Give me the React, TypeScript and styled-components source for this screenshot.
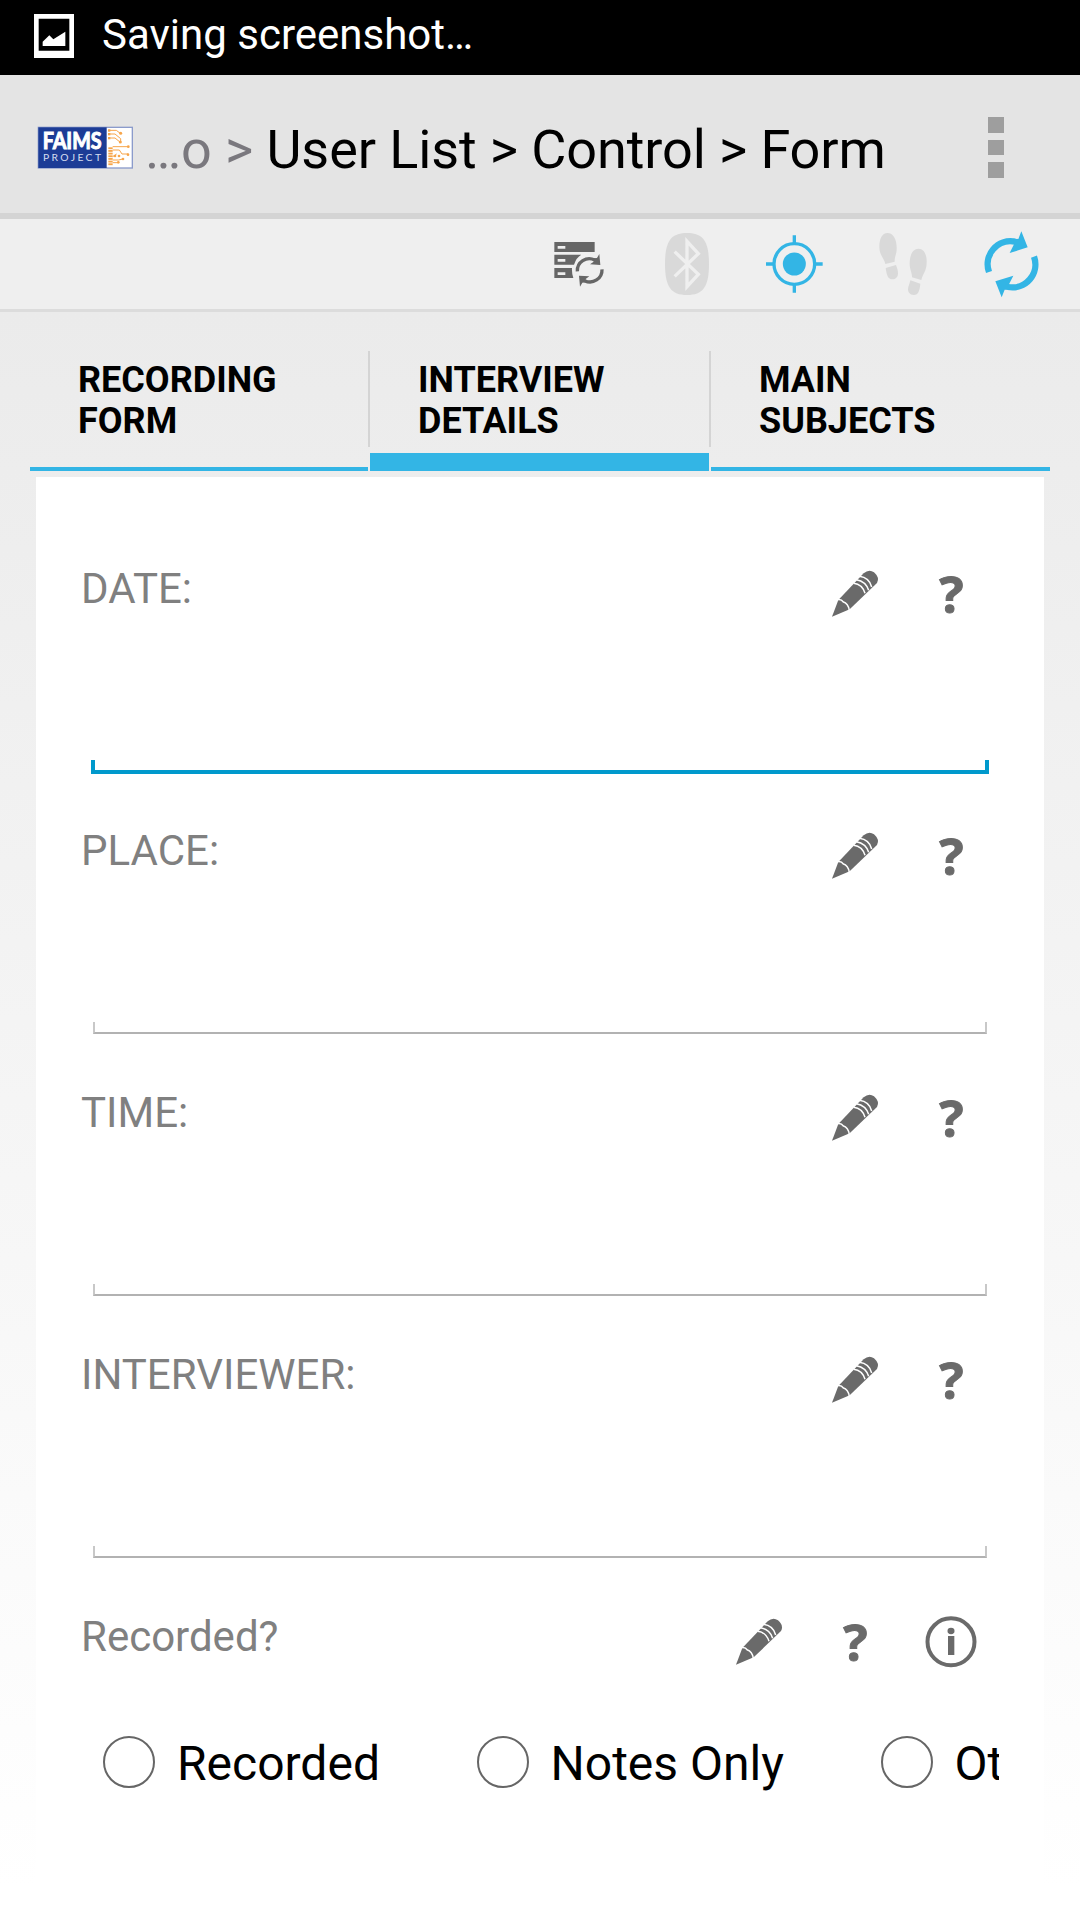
import React from "react";
import styled, { createGlobalStyle } from "styled-components";

const GlobalStyle = createGlobalStyle`
  * { box-sizing: border-box; }
  body { margin: 0; background: #fff; font-family: Roboto, "Liberation Sans", sans-serif; }
`;

const ACCENT = "#33b5e5";
const ICON = "#6a6a6a";
const MUTED = "#d9d9d9";

const Screen = styled.div`
  width: 1080px;
  height: 1920px;
  display: flex;
  flex-direction: column;
  overflow: hidden;
`;

const StatusBar = styled.div`
  height: 75px;
  flex: none;
  display: flex;
  align-items: flex-start;
  padding: 10px 0 0 34px;
  gap: 28px;
  background: #000;
  color: #fff;
  font-size: 42px;
  line-height: 50px;
`;

const StatusIcon = styled.svg`
  width: 40px;
  height: 44px;
  margin-top: 4px;
`;

const ActionBar = styled.header`
  height: 144px;
  flex: none;
  display: flex;
  align-items: center;
  padding: 0 76px 0 37px;
  background: #e4e4e4;
  border-bottom: 6px solid #d4d4d4;
`;

const Logo = styled.svg`
  width: 97px;
  height: 44px;
  margin-top: 8px;
`;

const Breadcrumb = styled.div`
  flex: 1;
  margin-left: 11px;
  padding-top: 11px;
  font-size: 54px;
  line-height: 64px;
  letter-spacing: -0.1px;
  white-space: pre;
  color: #000;
`;

const Faded = styled.span`
  color: #7a787e;
`;

const Overflow = styled.div`
  display: flex;
  flex-direction: column;
  gap: 7px;
  margin-top: 7px;
`;

const OverflowDot = styled.span`
  width: 16px;
  height: 15.5px;
  background: #9e9e9e;
`;

const Toolbar = styled.div`
  height: 93px;
  flex: none;
  display: flex;
  justify-content: flex-end;
  padding-right: 15px;
  background: #efefef;
  border-bottom: 3px solid #dcdcdc;
`;

const ToolIcon = styled.svg`
  width: 108px;
  height: 90px;
`;

const Content = styled.main`
  flex: 1;
  display: flex;
  flex-direction: column;
  padding: 39px 30px 0;
  background: linear-gradient(#ebebeb, #ffffff 98%);
`;

const Tabs = styled.nav`
  height: 120px;
  display: grid;
  grid-template-columns: 338px 2px 339px 2px 339px;
`;

const TabDivider = styled.span`
  height: 96px;
  background: #d4d4d4;
`;

const Tab = styled.div<{ $active?: boolean }>`
  padding: 9px 48px 0;
  border-bottom: ${(p) => (p.$active ? 18 : 4)}px solid ${ACCENT};
  font-size: 36px;
  font-weight: 700;
  line-height: 41px;
  color: #000;
  text-transform: uppercase;
`;

const Panel = styled.section`
  flex: 1;
  margin: 6px 6px 0;
  padding: 69px 45px 0;
  background: #fff;
`;

const Field = styled.div`
  height: 262px;
`;

const FieldHead = styled.div`
  height: 96px;
  display: flex;
  align-items: flex-start;
`;

const Label = styled.span`
  flex: 1;
  padding-top: 18px;
  font-size: 42px;
  line-height: 50px;
  color: #808080;
`;

const FieldIcon = styled.svg`
  width: 96px;
  height: 96px;
`;

const Help = styled.span`
  width: 96px;
  padding: 12px 0 0 1px;
  text-align: center;
  font: 700 51px/70px "Open Sans", "Noto Sans", sans-serif;
  -webkit-text-stroke: 1px ${ICON};
  color: ${ICON};
`;

const InputArea = styled.div<{ $focused?: boolean }>`
  height: ${(p) => (p.$focused ? 132 : 130)}px;
  margin: 0 ${(p) => (p.$focused ? 10 : 12)}px;
  display: flex;
  flex-direction: column;
  justify-content: flex-end;
`;

const Underline = styled.div<{ $focused?: boolean }>`
  height: ${(p) => (p.$focused ? 14 : 12)}px;
  border: ${(p) => (p.$focused ? "4px solid #0099cc" : "2px solid #c8c8c8")};
  border-bottom-color: ${(p) => (p.$focused ? "#0099cc" : "#b2b2b2")};
  border-top: 0;
`;

const RadioRow = styled.div`
  height: 144px;
  display: flex;
  align-items: center;
  gap: 96.6px;
  padding-left: 22px;
  overflow: hidden;
`;

const RadioOption = styled.div`
  flex: none;
  display: flex;
  align-items: center;
  gap: 22px;
  font-size: 48px;
  line-height: 56px;
  color: #000;
`;

const RadioCircle = styled.span`
  width: 52px;
  height: 52px;
  border: 2px solid #666;
  border-radius: 50%;
`;

const RadioText = styled.span`
  padding-top: 4px;
`;

const PictureIcon = () => (
  <StatusIcon viewBox="102 42 120 132">
    <path fill="#fff" fillRule="evenodd" d="M102 42h120v132H102zM116 56v96h92V56z" />
    <path fill="#fff" d="M128 138v-13l20-19 12 12 36-23v43z" />
  </StatusIcon>
);

const FaimsLogo = () => (
  <Logo viewBox="111 378 291 132">
    <rect x="115" y="382" width="282" height="122" fill="#fff" stroke="#8b9bcb" strokeWidth="4" />
    <rect x="115" y="382" width="205" height="122" fill="#1c3c96" />
    <text x="128" y="448" fontFamily="Lato, sans-serif" fontWeight="700" fontSize="68" fill="#fff" stroke="#fff" strokeWidth="3" textLength="177" lengthAdjust="spacingAndGlyphs">FAIMS</text>
    <text x="129" y="484" fontFamily="Lato, sans-serif" fontSize="31" fill="#d5dcf0" textLength="174">PROJECT</text>
    <g fill="none" stroke="#f7a54a" strokeWidth="3">
      <path d="M327 391h22l13 10M327 402h18l17 14v9M327 414h18l16 13M338 440h46M338 450h20l8 12h18M338 470l12-8M338 480h18l12-3M338 488h16" />
    </g>
    <g fill="#f7a54a">
      <rect x="324" y="388" width="7" height="7" />
      <rect x="324" y="399" width="7" height="7" />
      <rect x="324" y="411" width="7" height="7" />
      <circle cx="362" cy="400" r="4.500" />
      <circle cx="361" cy="426" r="4.500" />
      <circle cx="385" cy="440" r="4" />
      <circle cx="384" cy="464" r="4" />
      <circle cx="345" cy="468" r="4" />
      <circle cx="357" cy="468" r="4" />
      <circle cx="369" cy="477" r="4" />
      <circle cx="355" cy="487" r="4" />
      {[442, 450, 458, 466, 474, 482, 490].map((y) => (
        <rect key={y} x="325" y={y} width="13" height="5.500" />
      ))}
    </g>
  </Logo>
);

const SyncHalf = () => (
  <>
    <path d="M112 154a36 36 0 0 1 52-34" fill="none" stroke="#666" strokeWidth="10" />
    <path d="M178 102l3 33-31-2 11-8-2-10 12-1z" />
  </>
);

const ServerSyncIcon = () => (
  <ToolIcon viewBox="-45 -3 324 270" fill="#666">
    <path fillRule="evenodd" d="M43 66h121v30H43zM53 78v8h23v-8zM43 104h81q-15 8-22 30H43zM53 117v8h23v-8zM43 144h53q-1 17 4 30H43zM53 157v8h23v-8z" />
    <SyncHalf />
    <g transform="rotate(180 149 151)">
      <SyncHalf />
    </g>
  </ToolIcon>
);

const BluetoothIcon = () => (
  <ToolIcon viewBox="279 -3 324 270">
    <path fill={MUTED} d="M441 39C488 39 507 62 507 132S488 225 441 225 375 202 375 132 394 39 441 39z" />
    <path fill="none" stroke="#efefef" strokeWidth="10" d="M404 95L475 163 441 200V64L475 101 404 169" />
  </ToolIcon>
);

const TargetIcon = () => (
  <ToolIcon viewBox="603 -3 324 270">
    <circle cx="763" cy="132" r="61" fill="none" stroke={ACCENT} strokeWidth="10" />
    <circle cx="763" cy="132" r="34.500" fill={ACCENT} />
    <path stroke={ACCENT} strokeWidth="10" d="M763 46v24M763 194v24M678 132h24M824 132h24" />
  </ToolIcon>
);

const FootstepsIcon = () => (
  <ToolIcon viewBox="117 -3 324 270" fill={MUTED}>
    <path d="M232 39C250 39 260 58 260 82 261 102 253 110 254 125L226 132C224 118 208 106 208 80 208 56 217 39 232 39z" />
    <path d="M227 144L258 135C262 146 264 152 264 160 264 172 256 178 247 178 234 178 230 166 227 144z" />
    <path d="M326 86C342 86 351 104 350 128 350 152 338 162 334 180L306 172C307 158 298 148 299 128 300 104 308 86 326 86z" />
    <path d="M301 181L331 191C329 210 326 225 311 225 299 225 294 216 294 208 294 200 299 192 301 181z" />
  </ToolIcon>
);

const RefreshHalf = () => (
  <>
    <path d="M536 155A69 69 0 0 1 614 64" fill="none" stroke={ACCENT} strokeWidth="19" />
    <path d="M633 33L652 81 598 98 611 72 608 55 624 56z" fill={ACCENT} />
  </>
);

const RefreshIcon = () => (
  <ToolIcon viewBox="440 -4 324 270">
    <RefreshHalf />
    <g transform="rotate(180 603.500 132)">
      <RefreshHalf />
    </g>
  </ToolIcon>
);

const PencilIcon = () => (
  <FieldIcon viewBox="22 -12 288 288">
    <path fill={ICON} d="M97 200L116 150 192 70Q208 56 223 67 241 83 232 99L150 178z" />
    <g fill="none" stroke="#fff" strokeWidth="4.500">
      <path d="M113 149Q126 147 130 155 146 160 149 181" />
      <path d="M162 100Q188 103 196 130" />
      <path d="M170 89Q199 94 207 121" />
      <path d="M179 79Q209 83 216 111" />
    </g>
  </FieldIcon>
);

const InfoIcon = () => (
  <FieldIcon viewBox="609 12 288 288">
    <circle cx="753" cy="155.500" r="70.500" fill="none" stroke={ICON} strokeWidth="12" />
    <ellipse cx="753" cy="123" rx="10.500" ry="9.500" fill={ICON} />
    <rect x="744" y="138" width="19" height="57" fill={ICON} />
  </FieldIcon>
);

const FIELDS = ["DATE:", "PLACE:", "TIME:", "INTERVIEWER:"];
const OPTIONS = ["Recorded", "Notes Only", "Other"];

export default function App() {
  return (
    <Screen>
      <GlobalStyle />
      <StatusBar>
        <PictureIcon />
        <span>Saving screenshot…</span>
      </StatusBar>
      <ActionBar>
        <FaimsLogo />
        <Breadcrumb>
          <Faded>…o &gt; </Faded>User List &gt; Control &gt; Form
        </Breadcrumb>
        <Overflow>
          <OverflowDot />
          <OverflowDot />
          <OverflowDot />
        </Overflow>
      </ActionBar>
      <Toolbar>
        <ServerSyncIcon />
        <BluetoothIcon />
        <TargetIcon />
        <FootstepsIcon />
        <RefreshIcon />
      </Toolbar>
      <Content>
        <Tabs>
          <Tab>Recording Form</Tab>
          <TabDivider />
          <Tab $active>Interview Details</Tab>
          <TabDivider />
          <Tab>Main Subjects</Tab>
        </Tabs>
        <Panel>
          {FIELDS.map((name, i) => (
            <Field key={name}>
              <FieldHead>
                <Label>{name}</Label>
                <PencilIcon />
                <Help>?</Help>
              </FieldHead>
              <InputArea $focused={i === 0}>
                <Underline $focused={i === 0} />
              </InputArea>
            </Field>
          ))}
          <FieldHead>
            <Label>Recorded?</Label>
            <PencilIcon />
            <Help>?</Help>
            <InfoIcon />
          </FieldHead>
          <RadioRow>
            {OPTIONS.map((name) => (
              <RadioOption key={name}>
                <RadioCircle />
                <RadioText>{name}</RadioText>
              </RadioOption>
            ))}
          </RadioRow>
        </Panel>
      </Content>
    </Screen>
  );
}
